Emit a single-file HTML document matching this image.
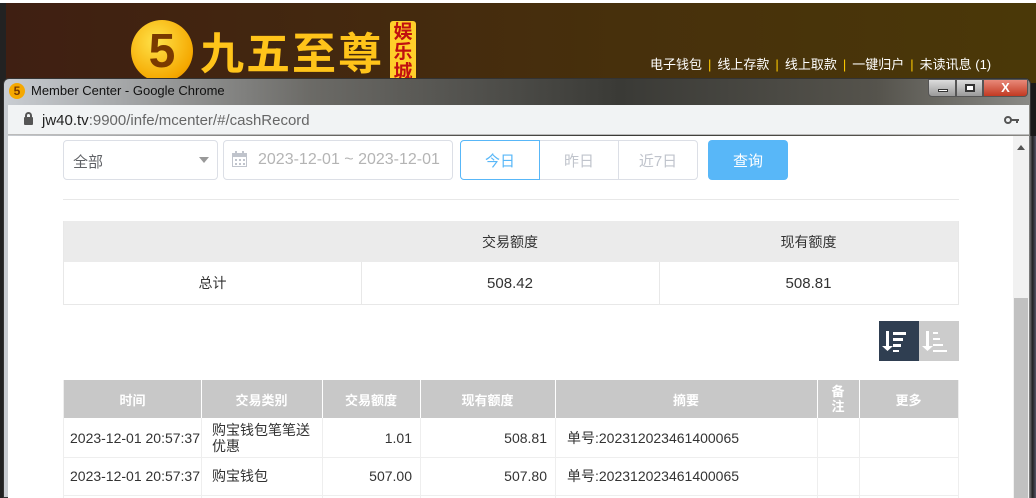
<!DOCTYPE html><html><head><meta charset="utf-8"><style>
*{margin:0;padding:0;box-sizing:border-box}
body{width:1036px;height:498px;overflow:hidden;position:relative;background:#1a1a1a;font-family:"Liberation Sans","Noto Sans CJK SC",sans-serif}
.a{position:absolute}
.cell{position:absolute;display:flex;align-items:center;font-size:14px;color:#333}
.sep{color:#fc0;margin:0 6px}
</style></head><body>
<div class="a" style="left:0;top:0;width:1036px;height:3px;background:#fff"></div>
<div class="a" style="left:6px;top:3px;width:1030px;height:80px;background:linear-gradient(90deg,#3f1f12,#47300c 60%,#4a3808)"></div>
<div class="a" style="left:0;top:3px;width:6px;height:495px;background:#222"></div>
<div class="a" style="left:131px;top:20px;width:62px;height:62px;border-radius:50%;background:radial-gradient(circle at 40% 35%,#ffe34a,#f5a800 70%,#d98000);color:#7a3a00;font:bold 48px 'Liberation Sans';display:flex;align-items:center;justify-content:center">5</div>
<div class="a" style="left:200px;top:22px;font:bold 44px 'Noto Sans CJK SC';color:#ffc41a;letter-spacing:2px;line-height:56px">九五至尊</div>
<div class="a" style="left:390px;top:21px;width:26px;height:60px;background:#ffcf2a;border-radius:3px;color:#c01010;font:bold 19px 'Noto Sans CJK SC';line-height:20px;text-align:center">娱乐城</div>
<div class="a" style="left:650px;top:54px;font-size:13px;color:#fff;white-space:nowrap">电子钱包<span class="sep">|</span>线上存款<span class="sep">|</span>线上取款<span class="sep">|</span>一键归户<span class="sep">|</span>未读讯息 (1)</div>
<div class="a" style="left:3px;top:78px;width:1028px;height:420px;border-radius:6px 6px 0 0;background:linear-gradient(90deg,#c9cdd2,#6b6a66 30%,#3a3a36 60%,#55534c 85%,#8a8a86);border:1px solid #333"></div>
<div class="a" style="left:9px;top:83px;width:16px;height:16px;border-radius:50%;background:#f5a800;color:#7a3a00;font:bold 12px 'Liberation Sans';text-align:center;line-height:16px">5</div>
<div class="a" style="left:31px;top:83px;font-size:13px;color:#111">Member Center - Google Chrome</div>
<div class="a" style="left:928px;top:79px;width:28px;height:18px;border:1px solid #555;border-radius:0 0 0 4px;background:linear-gradient(#ddd,#9a9a9a)"><div class="a" style="left:9px;top:9px;width:10px;height:3px;background:#fff;border:1px solid #333"></div></div>
<div class="a" style="left:956px;top:79px;width:27px;height:18px;border:1px solid #555;background:linear-gradient(#ddd,#9a9a9a)"><div class="a" style="left:8px;top:4px;width:10px;height:8px;border:2px solid #333;background:#fff"></div></div>
<div class="a" style="left:983px;top:79px;width:45px;height:18px;border:1px solid #555;border-radius:0 0 4px 0;background:linear-gradient(#e88a7a,#c23a22);color:#fff;font:bold 13px 'Liberation Sans';text-align:center;line-height:16px">X</div>
<div class="a" style="left:8px;top:105px;width:1021px;height:30px;background:#f1f3f4;border-bottom:1px solid #bbb"></div>
<div class="a" style="left:24px;top:117px;width:9px;height:8px;background:#555;border-radius:1px"></div>
<div class="a" style="left:25px;top:112px;width:7px;height:7px;border:2px solid #555;border-bottom:none;border-radius:4px 4px 0 0"></div>
<div class="a" style="left:42px;top:112px;font-size:15px;color:#222">jw40.tv<span style="color:#666">:9900/infe/mcenter/#/cashRecord</span></div>
<svg class="a" style="left:1004px;top:115px" width="16" height="10"><circle cx="4" cy="5" r="3" fill="none" stroke="#555" stroke-width="2"/><rect x="7" y="4" width="8" height="2" fill="#555"/><rect x="12" y="5" width="2" height="3" fill="#555"/></svg>
<div class="a" style="left:8px;top:136px;width:1005px;height:362px;background:#fff"></div>
<div class="a" style="left:1013px;top:136px;width:16px;height:362px;background:#f1f1f1"></div>
<div class="a" style="left:1017px;top:145px;width:0;height:0;border:4px solid transparent;border-bottom:5px solid #555;border-top:none"></div>
<div class="a" style="left:1014px;top:298px;width:14px;height:200px;background:#c1c1c1"></div>
<div class="a" style="left:1029px;top:136px;width:7px;height:362px;background:linear-gradient(90deg,#888,#222,#556)"></div>
<div class="a" style="left:63px;top:140px;width:155px;height:40px;border:1px solid #dcdfe6;border-radius:4px"></div>
<div class="a" style="left:73px;top:151px;font-size:15px;color:#606266">全部</div>
<div class="a" style="left:199px;top:157px;border:5px solid transparent;border-top:6px solid #999;border-bottom:none"></div>
<div class="a" style="left:223px;top:140px;width:230px;height:40px;border:1px solid #dcdfe6;border-radius:4px"></div>
<svg class="a" style="left:232px;top:151px" width="15" height="16"><rect x="0.5" y="2.5" width="14" height="13" fill="#fff" stroke="#c0c4cc"/><rect x="0" y="2" width="15" height="4" fill="#c0c4cc"/><rect x="3" y="0" width="2" height="4" fill="#c0c4cc"/><rect x="10" y="0" width="2" height="4" fill="#c0c4cc"/><g fill="#c0c4cc"><rect x="3" y="8" width="2" height="2"/><rect x="7" y="8" width="2" height="2"/><rect x="11" y="8" width="2" height="2"/><rect x="3" y="12" width="2" height="2"/><rect x="7" y="12" width="2" height="2"/><rect x="11" y="12" width="2" height="2"/></g></svg>
<div class="a" style="left:258px;top:151px;font-size:16px;color:#b4b4b4">2023-12-01 ~ 2023-12-01</div>
<div class="a" style="left:460px;top:140px;width:80px;height:40px;border:1px solid #58b7f8;border-radius:4px 0 0 4px;color:#58b7f8;font-size:15px;display:flex;align-items:center;justify-content:center">今日</div>
<div class="a" style="left:540px;top:140px;width:79px;height:40px;border:1px solid #dcdfe6;border-left:none;color:#c0c4cc;font-size:15px;display:flex;align-items:center;justify-content:center">昨日</div>
<div class="a" style="left:618px;top:140px;width:80px;height:40px;border:1px solid #dcdfe6;border-radius:0 4px 4px 0;color:#c0c4cc;font-size:15px;display:flex;align-items:center;justify-content:center">近7日</div>
<div class="a" style="left:708px;top:140px;width:80px;height:40px;background:#58b7f8;border-radius:4px;color:#fff;font-size:15px;display:flex;align-items:center;justify-content:center">查询</div>
<div class="a" style="left:63px;top:199px;width:896px;height:1px;background:#e8e8e8"></div>
<div class="a" style="left:63px;top:221px;width:896px;height:84px;border:1px solid #e8e8e8"></div>
<div class="a" style="left:64px;top:221px;width:894px;height:41px;background:#ebebeb"></div>
<div class="a" style="left:361px;top:262px;width:1px;height:42px;background:#e8e8e8"></div>
<div class="a" style="left:659px;top:262px;width:1px;height:42px;background:#e8e8e8"></div>
<div class="cell" style="left:361px;top:221px;width:298px;height:41px;justify-content:center">交易额度</div>
<div class="cell" style="left:659px;top:221px;width:299px;height:41px;justify-content:center">现有额度</div>
<div class="cell" style="left:64px;top:262px;width:297px;height:42px;justify-content:center">总计</div>
<div class="cell" style="left:361px;top:262px;width:298px;height:42px;justify-content:center;font-size:15px">508.42</div>
<div class="cell" style="left:659px;top:262px;width:299px;height:42px;justify-content:center;font-size:15px">508.81</div>
<div class="a" style="left:879px;top:321px;width:40px;height:40px;background:#2f3e51">
<svg width="40" height="40"><g fill="#fff"><rect x="7" y="10" width="3" height="16"/><path d="M3 25h11l-5.5 5z"/><rect x="14" y="11" width="13" height="3"/><rect x="14" y="17" width="10" height="3"/><rect x="14" y="23" width="8" height="3"/><rect x="14" y="29" width="6" height="2"/></g></svg></div>
<div class="a" style="left:919px;top:321px;width:40px;height:40px;background:#ccc">
<svg width="40" height="40"><g fill="#fff"><rect x="7" y="10" width="3" height="16"/><path d="M3 25h11l-5.5 5z"/><rect x="14" y="11" width="5" height="2"/><rect x="14" y="17" width="7" height="2"/><rect x="14" y="23" width="10" height="2"/><rect x="14" y="29" width="14" height="2"/></g></svg></div>
<div class="a" style="left:63px;top:380px;width:896px;height:118px;border-left:1px solid #eee;border-right:1px solid #eee"></div>
<div class="a" style="left:64px;top:380px;width:894px;height:38px;background:#c8c8c8"></div>
<div class="a" style="left:64px;top:457px;width:894px;height:1px;background:#eee"></div>
<div class="a" style="left:64px;top:495px;width:894px;height:1px;background:#eee"></div>
<div class="a" style="left:201px;top:380px;width:1px;height:118px;background:#fff"></div>
<div class="a" style="left:322px;top:380px;width:1px;height:118px;background:#fff"></div>
<div class="a" style="left:420px;top:380px;width:1px;height:118px;background:#fff"></div>
<div class="a" style="left:555px;top:380px;width:1px;height:118px;background:#fff"></div>
<div class="a" style="left:817px;top:380px;width:1px;height:118px;background:#fff"></div>
<div class="a" style="left:859px;top:380px;width:1px;height:118px;background:#fff"></div>
<div class="a" style="left:201px;top:418px;width:1px;height:80px;background:#eee"></div>
<div class="a" style="left:322px;top:418px;width:1px;height:80px;background:#eee"></div>
<div class="a" style="left:420px;top:418px;width:1px;height:80px;background:#eee"></div>
<div class="a" style="left:555px;top:418px;width:1px;height:80px;background:#eee"></div>
<div class="a" style="left:817px;top:418px;width:1px;height:80px;background:#eee"></div>
<div class="a" style="left:859px;top:418px;width:1px;height:80px;background:#eee"></div>
<div class="cell" style="left:64px;top:380px;width:137px;height:38px;justify-content:center;color:#fff;font-weight:bold;font-size:13px">时间</div>
<div class="cell" style="left:201px;top:380px;width:121px;height:38px;justify-content:center;color:#fff;font-weight:bold;font-size:13px">交易类别</div>
<div class="cell" style="left:322px;top:380px;width:98px;height:38px;justify-content:center;color:#fff;font-weight:bold;font-size:13px">交易额度</div>
<div class="cell" style="left:420px;top:380px;width:135px;height:38px;justify-content:center;color:#fff;font-weight:bold;font-size:13px">现有额度</div>
<div class="cell" style="left:555px;top:380px;width:262px;height:38px;justify-content:center;color:#fff;font-weight:bold;font-size:13px">摘要</div>
<div class="cell" style="left:817px;top:380px;width:42px;height:38px;justify-content:center;color:#fff;font-weight:bold;font-size:13px;line-height:15px;text-align:center;padding:0 14px">备注</div>
<div class="cell" style="left:859px;top:380px;width:99px;height:38px;justify-content:center;color:#fff;font-weight:bold;font-size:13px">更多</div>
<div class="cell" style="left:70px;top:418px;height:39px">2023-12-01 20:57:37</div>
<div class="cell" style="left:212px;top:418px;width:100px;height:39px;line-height:16px">购宝钱包笔笔送优惠</div>
<div class="cell" style="left:322px;top:418px;width:90px;height:39px;justify-content:flex-end">1.01</div>
<div class="cell" style="left:420px;top:418px;width:127px;height:39px;justify-content:flex-end">508.81</div>
<div class="cell" style="left:567px;top:418px;height:39px">单号:202312023461400065</div>
<div class="cell" style="left:70px;top:457px;height:38px">2023-12-01 20:57:37</div>
<div class="cell" style="left:212px;top:457px;height:38px">购宝钱包</div>
<div class="cell" style="left:322px;top:457px;width:90px;height:38px;justify-content:flex-end">507.00</div>
<div class="cell" style="left:420px;top:457px;width:127px;height:38px;justify-content:flex-end">507.80</div>
<div class="cell" style="left:567px;top:457px;height:38px">单号:202312023461400065</div>
</body></html>
